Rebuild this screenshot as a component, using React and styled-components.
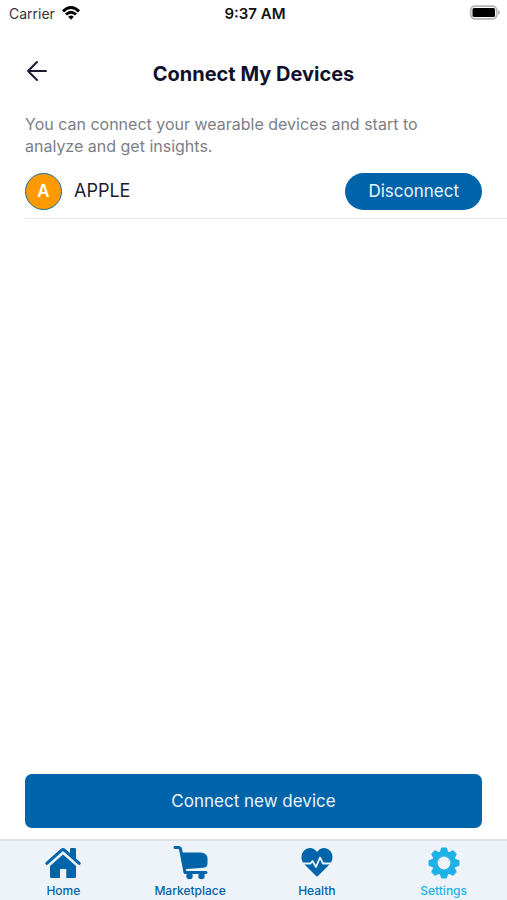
import React from 'react';
import styled, { createGlobalStyle } from 'styled-components';

const tabs = [
    { label: 'Home', icon: HomeIcon },
    { label: 'Marketplace', icon: CartIcon },
    { label: 'Health', icon: HealthIcon },
    { label: 'Settings', icon: GearIcon, active: true },
];

export default function App() {
    return (
        <Screen>
            <GlobalStyle />
            <StatusBar>
                <Carrier>
                    Carrier
                    <WifiIcon />
                </Carrier>
                <Time>9:37 AM</Time>
                <BatteryIcon />
            </StatusBar>
            <Header>
                <BackButton type="button" aria-label="Back">
                    <ArrowIcon />
                </BackButton>
                <Title>Connect My Devices</Title>
            </Header>
            <Content>
                <Desc>You can connect your wearable devices and start to analyze and get insights.</Desc>
                <DeviceRow>
                    <Avatar>A</Avatar>
                    <DeviceName>APPLE</DeviceName>
                    <PillButton type="button">Disconnect</PillButton>
                </DeviceRow>
            </Content>
            <ConnectButton type="button">Connect new device</ConnectButton>
            <TabBar>
                {tabs.map(({ label, icon: Icon, active }) => (
                    <Tab key={label} href={`#${label.toLowerCase()}`} $active={active}>
                        <Icon />
                        {label}
                    </Tab>
                ))}
            </TabBar>
        </Screen>
    );
}

function WifiIcon() {
    return (
        <svg width="20" height="16" viewBox="0 0 20 16" aria-hidden="true">
            <g fill="none" stroke="#000" strokeWidth="3">
                <path d="M2 6.3Q10 -1.3 18 6.3" />
                <path d="M5 9.5Q10 5 15 9.5" />
            </g>
            <path d="M7.2 11.7Q10 9.4 12.8 11.7L10 14.7Z" />
        </svg>
    );
}

function BatteryIcon() {
    return (
        <svg width="32" height="16" viewBox="0 0 32 16" aria-hidden="true">
            <rect x="1.7" y="1.2" width="26" height="12.6" rx="4" fill="#fff" stroke="#b5b5b5" strokeWidth="1.8" />
            <rect x="3.5" y="3" width="22.5" height="9" rx="1.5" />
            <path d="M29 5Q31 5.8 31 7.5T29 10Z" fill="#b5b5b5" />
        </svg>
    );
}

function ArrowIcon() {
    return (
        <svg width="22" height="22" viewBox="0 0 22 22" aria-hidden="true">
            <path
                d="M20 11H2M11 2L2 11L11 20"
                fill="none"
                stroke="#1b1b33"
                strokeWidth="2"
                strokeLinecap="round"
                strokeLinejoin="round"
            />
        </svg>
    );
}

function HomeIcon() {
    return (
        <svg width="36" height="36" viewBox="0 0 36 36" aria-hidden="true">
            <path d="M25 7V4.2Q25 3 26.2 3H30Q31 3 31 4.2V14L25 9Z" fill="currentColor" />
            <path
                d="M1.8 18.3L16.3 5.3Q18 3.9 19.7 5.3L34.2 18.3"
                fill="none"
                stroke="currentColor"
                strokeWidth="3"
                strokeLinecap="round"
            />
            <path
                d="M18 9.5L31 21V31.5Q31 33 29.5 33H21.3V24H15V33H6.5Q5 33 5 31.5V21Z"
                fill="currentColor"
            />
        </svg>
    );
}

function CartIcon() {
    return (
        <svg width="36" height="36" viewBox="0 0 36 36" aria-hidden="true">
            <path
                d="M3 2.5H6.3Q8.2 2.5 8.6 4.5L13 27.5H34"
                fill="none"
                stroke="currentColor"
                strokeWidth="3"
                strokeLinecap="round"
                strokeLinejoin="round"
            />
            <path
                d="M9 7.5H29Q35.5 8.5 35.5 13.5V18.5Q35.5 22.3 31.5 22.8L12 24.3Z"
                fill="currentColor"
            />
            <circle cx="17.5" cy="31" r="3.2" fill="currentColor" />
            <circle cx="29.5" cy="31" r="3.2" fill="currentColor" />
        </svg>
    );
}

function HealthIcon() {
    return (
        <svg width="36" height="36" viewBox="0 0 36 36" aria-hidden="true">
            <path
                d="M18 7C14.5 1.8 8.5 2.2 5.2 5.5C1.3 9.4 2 15.6 5 19L16.8 30.8Q18 32 19.2 30.8L31 19C34 15.6 34.7 9.4 30.8 5.5C27.5 2.2 21.5 1.8 18 7Z"
                fill="currentColor"
            />
            <path
                d="M2 18.5H11.5L13.5 16L17 22L21 12.5L24 18.5H34"
                fill="none"
                stroke="#edf3f9"
                strokeWidth="1.8"
                strokeLinejoin="round"
            />
        </svg>
    );
}

function GearIcon() {
    return (
        <svg width="36" height="36" viewBox="0 0 36 36" aria-hidden="true">
            <circle cx="18" cy="18" r="9.2" fill="none" stroke="currentColor" strokeWidth="5.6" />
            {[0, 45, 90, 135, 180, 225, 270, 315].map((angle) => (
                <path
                    key={angle}
                    d="M13.6 8L14.8 3.8Q15 2.5 16.3 2.5H19.7Q21 2.5 21.2 3.8L22.4 8Z"
                    fill="currentColor"
                    transform={`rotate(${angle} 18 18)`}
                />
            ))}
        </svg>
    );
}

const GlobalStyle = createGlobalStyle`
    * {
        box-sizing: border-box;
    }
    body {
        margin: 0;
        background: #fff;
        font-family: Inter, "Liberation Sans", sans-serif;
    }
    button {
        font-family: inherit;
        cursor: pointer;
    }
    svg {
        display: block;
        flex-shrink: 0;
    }
`;

const Screen = styled.div`
    display: flex;
    flex-direction: column;
    min-height: 100vh;
`;
const StatusBar = styled.div`
    display: grid;
    grid-template-columns: 1fr auto 1fr;
    align-items: center;
    height: 26px;
    padding: 0 6px 0 9px;
    font-size: 14px;
    color: #111;
    > :last-child {
        justify-self: end;
    }
`;
const Carrier = styled.div`
    display: flex;
    align-items: center;
    gap: 6px;
    color: #333;
`;
const Time = styled.div`
    font-size: 15px;
    font-weight: 600;
`;
const Header = styled.header`
    display: grid;
    grid-template-columns: 22px 1fr 22px;
    align-items: center;
    padding: 34px 26px 24px;
`;
const BackButton = styled.button`
    padding: 0 0 6px;
    border: 0;
    background: none;
`;
const Title = styled.h1`
    margin: 0;
    font-size: 20px;
    font-weight: 700;
    line-height: 28px;
    text-align: center;
    color: #11112b;
`;
const Content = styled.main`
    flex: 1;
    padding-left: 25px;
`;
const Desc = styled.p`
    margin: 0;
    padding: 1px 50px 16px 0;
    font-size: 16px;
    line-height: 22px;
    color: #7b7e87;
`;
const DeviceRow = styled.div`
    display: flex;
    align-items: center;
    gap: 12px;
    padding: 0 25px 8px 0;
    border-bottom: 1px solid #e6e6e8;
`;
const Avatar = styled.div`
    display: flex;
    align-items: center;
    justify-content: center;
    width: 37px;
    height: 37px;
    padding-bottom: 2px;
    border: 1px solid #1b6f9e;
    border-radius: 50%;
    background: #ff9900;
    color: #fff;
    font-size: 17px;
    font-weight: 600;
`;
const DeviceName = styled.div`
    flex: 1;
    padding-bottom: 2px;
    font-size: 18px;
    color: #1b1b33;
`;
const PillButton = styled.button`
    height: 37px;
    padding: 0 23px 2px;
    border: 0;
    border-radius: 20px;
    background: #0064aa;
    color: #e9f4fc;
    font-size: 17px;
`;
const ConnectButton = styled.button`
    height: 54px;
    margin: 0 25px 11px;
    padding-bottom: 2px;
    border: 0;
    border-radius: 7px;
    background: #0064aa;
    color: #e9f4fc;
    font-size: 17px;
`;
const TabBar = styled.nav`
    display: grid;
    grid-template-columns: repeat(4, 1fr);
    height: 61px;
    padding-top: 4px;
    border-top: 2px solid #dde2e6;
    background: #edf3f9;
`;
const Tab = styled.a`
    display: flex;
    flex-direction: column;
    align-items: center;
    gap: 2px;
    font-size: 12px;
    font-weight: 500;
    line-height: 16px;
    text-decoration: none;
    color: ${(props) => (props.$active ? '#1fb2e7' : '#0064aa')};
`;
